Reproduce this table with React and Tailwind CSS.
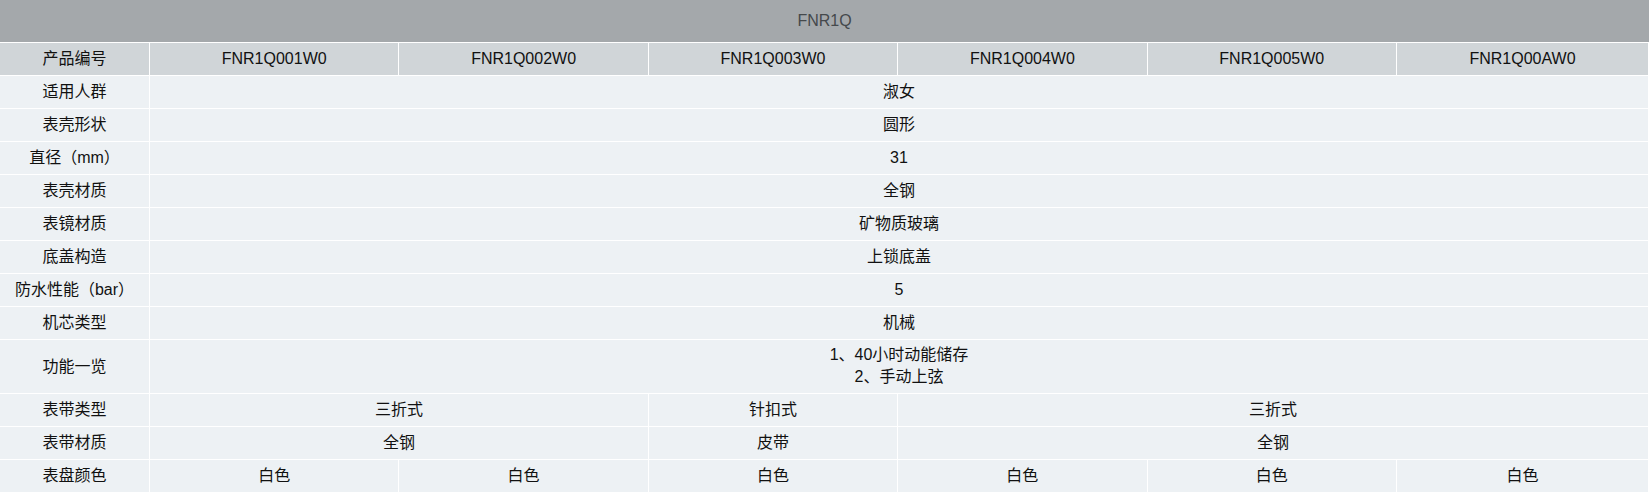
import React from 'react';

const models = ['FNR1Q001W0', 'FNR1Q002W0', 'FNR1Q003W0', 'FNR1Q004W0', 'FNR1Q005W0', 'FNR1Q00AW0'];

// rows that span all six model columns
const specs = [
  ['适用人群', '淑女'],
  ['表壳形状', '圆形'],
  ['直径（mm）', '31'],
  ['表壳材质', '全钢'],
  ['表镜材质', '矿物质玻璃'],
  ['底盖构造', '上锁底盖'],
  ['防水性能（bar）', '5'],
  ['机芯类型', '机械'],
];

const splitRows = [
  ['表带类型', [['三折式', 2], ['针扣式', 1], ['三折式', 3]]],
  ['表带材质', [['全钢', 2], ['皮带', 1], ['全钢', 3]]],
];

const cell = 'border-t border-white text-center leading-[32px] p-0 font-normal';
const last = 'border-r';

const App = () => {
  return (
    <div
      className="w-[1649px] bg-[#edf1f4] text-[16px] text-[#111]"
      style={{ fontFamily: '"Liberation Sans", Arial, "Noto Sans CJK SC", sans-serif' }}
    >
      <table className="w-full table-fixed border-separate border-spacing-0">
        <colgroup>
          <col className="w-[149px]" />
          <col className="w-[249.4px]" />
          <col className="w-[249.4px]" />
          <col className="w-[249.4px]" />
          <col className="w-[249.4px]" />
          <col className="w-[249.4px]" />
          <col />
        </colgroup>
        <thead>
          <tr>
            <th colSpan={7} className="h-[42px] bg-[#a4a8ab] text-[#45494c] font-normal text-center p-0">
              FNR1Q
            </th>
          </tr>
          <tr className="bg-[#d0d5d8]">
            <td className={cell}>产品编号</td>
            {models.map((m, i) => (
              <td key={m} className={`${cell} border-l ${i === 5 ? last : ''}`}>{m}</td>
            ))}
          </tr>
        </thead>
        <tbody>
          {specs.map(([label, value]) => (
            <tr key={label}>
              <td className={cell}>{label}</td>
              <td colSpan={6} className={`${cell} border-l ${last}`}>{value}</td>
            </tr>
          ))}
          <tr>
            <td className="border-t border-white text-center p-0 h-[54px]">功能一览</td>
            <td colSpan={6} className="border-t border-l border-r border-white text-center leading-[22px] pt-[4px] pb-[5px] px-0">
              <div>1、40小时动能储存</div>
              <div>2、手动上弦</div>
            </td>
          </tr>
          {splitRows.map(([label, parts]) => (
            <tr key={label}>
              <td className={cell}>{label}</td>
              {parts.map(([v, span], i) => (
                <td key={i} colSpan={span} className={`${cell} border-l ${i === 2 ? last : ''}`}>{v}</td>
              ))}
            </tr>
          ))}
          <tr>
            <td className={cell}>表盘颜色</td>
            {models.map((m, i) => (
              <td key={m} className={`${cell} border-l ${i === 5 ? last : ''}`}>白色</td>
            ))}
          </tr>
        </tbody>
      </table>
    </div>
  );
};

export default App;
